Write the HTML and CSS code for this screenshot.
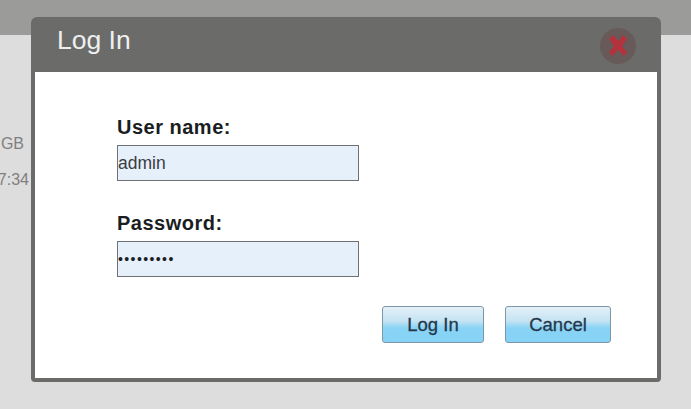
FILE: index.html
```
<!DOCTYPE html>
<html lang="en">
<head>
<meta charset="utf-8">
<title>Log In</title>
<link rel="stylesheet" href="styles.css">
</head>
<body>
<div class="page">
  <div class="topbar"></div>
  <div class="status">
    <div class="status-line">GB</div>
    <div class="status-line">7:34</div>
  </div>
</div>
<div class="dialog" role="dialog">
  <div class="dialog-head">
    <h1 class="dialog-title">Log In</h1>
    <button class="close" type="button" aria-label="Close">
      <svg class="close-icon" viewBox="0 0 36 36" width="36" height="36">
        <circle cx="18" cy="18" r="18" fill="#685a59"/>
        <path d="M9 11 L13 7 L18 13 L23 7 L27 11 L22 18 L27 24 L24 28 L18 22 L12 28 L9 24 L14 18 Z" fill="#b3323c"/>
      </svg>
    </button>
  </div>
  <form class="dialog-body">
    <div class="field">
      <label class="label" for="user">User name:</label>
      <input class="input" id="user" type="text" value="admin">
    </div>
    <div class="field">
      <label class="label" for="pass">Password:</label>
      <input class="input input-secret" id="pass" type="password" value="123456789">
    </div>
    <div class="actions">
      <button class="btn" type="button">Log In</button>
      <button class="btn btn-cancel" type="button">Cancel</button>
    </div>
  </form>
</div>
</body>
</html>
```
FILE: styles.css
```
* { box-sizing: border-box; }
html, body { margin: 0; height: 100%; }
body {
  background: #dddddd;
  font-family: "Liberation Sans", Arial, sans-serif;
  overflow: hidden;
}
.topbar {
  height: 35px;
  background: #9b9c9a;
}
.status {
  padding-top: 99px;
  display: flex;
  flex-direction: column;
  gap: 17px;
  align-items: flex-end;
  width: 29px;
}
.status-line {
  font-size: 16px;
  line-height: 19px;
  color: #7f7f7f;
  white-space: nowrap;
}
.status-line:first-child { margin-right: 5px; }
.dialog {
  position: absolute;
  left: 31px;
  top: 17px;
  width: 630px;
  height: 365px;
  display: flex;
  flex-direction: column;
  background: #6b6b69;
  border-radius: 6px 6px 4px 4px;
  padding: 0 4px 4px 4px;
}
.dialog-head {
  height: 55px;
  flex: none;
  display: flex;
  align-items: flex-start;
  justify-content: space-between;
  padding: 8px 21px 0 22px;
}
.dialog-title {
  margin: 0;
  font-size: 26.5px;
  line-height: 30px;
  font-weight: normal;
  color: #eef0f0;
}
.close {
  border: 0;
  padding: 0;
  margin: 3px 0 0;
  background: none;
  width: 36px;
  height: 36px;
}
.close-icon { display: block; }
.dialog-body {
  flex: 1;
  background: #ffffff;
  padding: 45px 46px 0 82px;
  display: flex;
  flex-direction: column;
}
.field + .field { margin-top: 32px; }
.label {
  display: block;
  font-size: 20px;
  line-height: 21px;
  font-weight: bold;
  letter-spacing: 0.5px;
  color: #1a1d22;
  margin-bottom: 7px;
}
.input {
  display: block;
  width: 242px;
  height: 36px;
  border: 1.5px solid #6f7274;
  background: #e6f0fb;
  padding: 0;
  font-family: "Liberation Sans", Arial, sans-serif;
  font-size: 17.5px;
  color: #3a3d40;
  border-radius: 0;
  outline: 0;
}
.input-secret {
  font-size: 14px;
  letter-spacing: 1.4px;
  color: #1a1d22;
}
.actions {
  display: flex;
  justify-content: flex-end;
  gap: 21px;
  margin-top: 29px;
}
.btn {
  width: 102px;
  height: 37px;
  border: 1px solid #7d97a8;
  border-radius: 3px;
  background: linear-gradient(#e4f0f7 0%, #c5e3f3 40%, #88d3f6 60%, #86d3f6 100%);
  font-family: "Liberation Sans", Arial, sans-serif;
  font-size: 18.5px;
  font-weight: normal;
  -webkit-text-stroke: 0.3px #25384a;
  color: #25384a;
  padding: 0;
}
.btn-cancel { width: 106px; }
```
